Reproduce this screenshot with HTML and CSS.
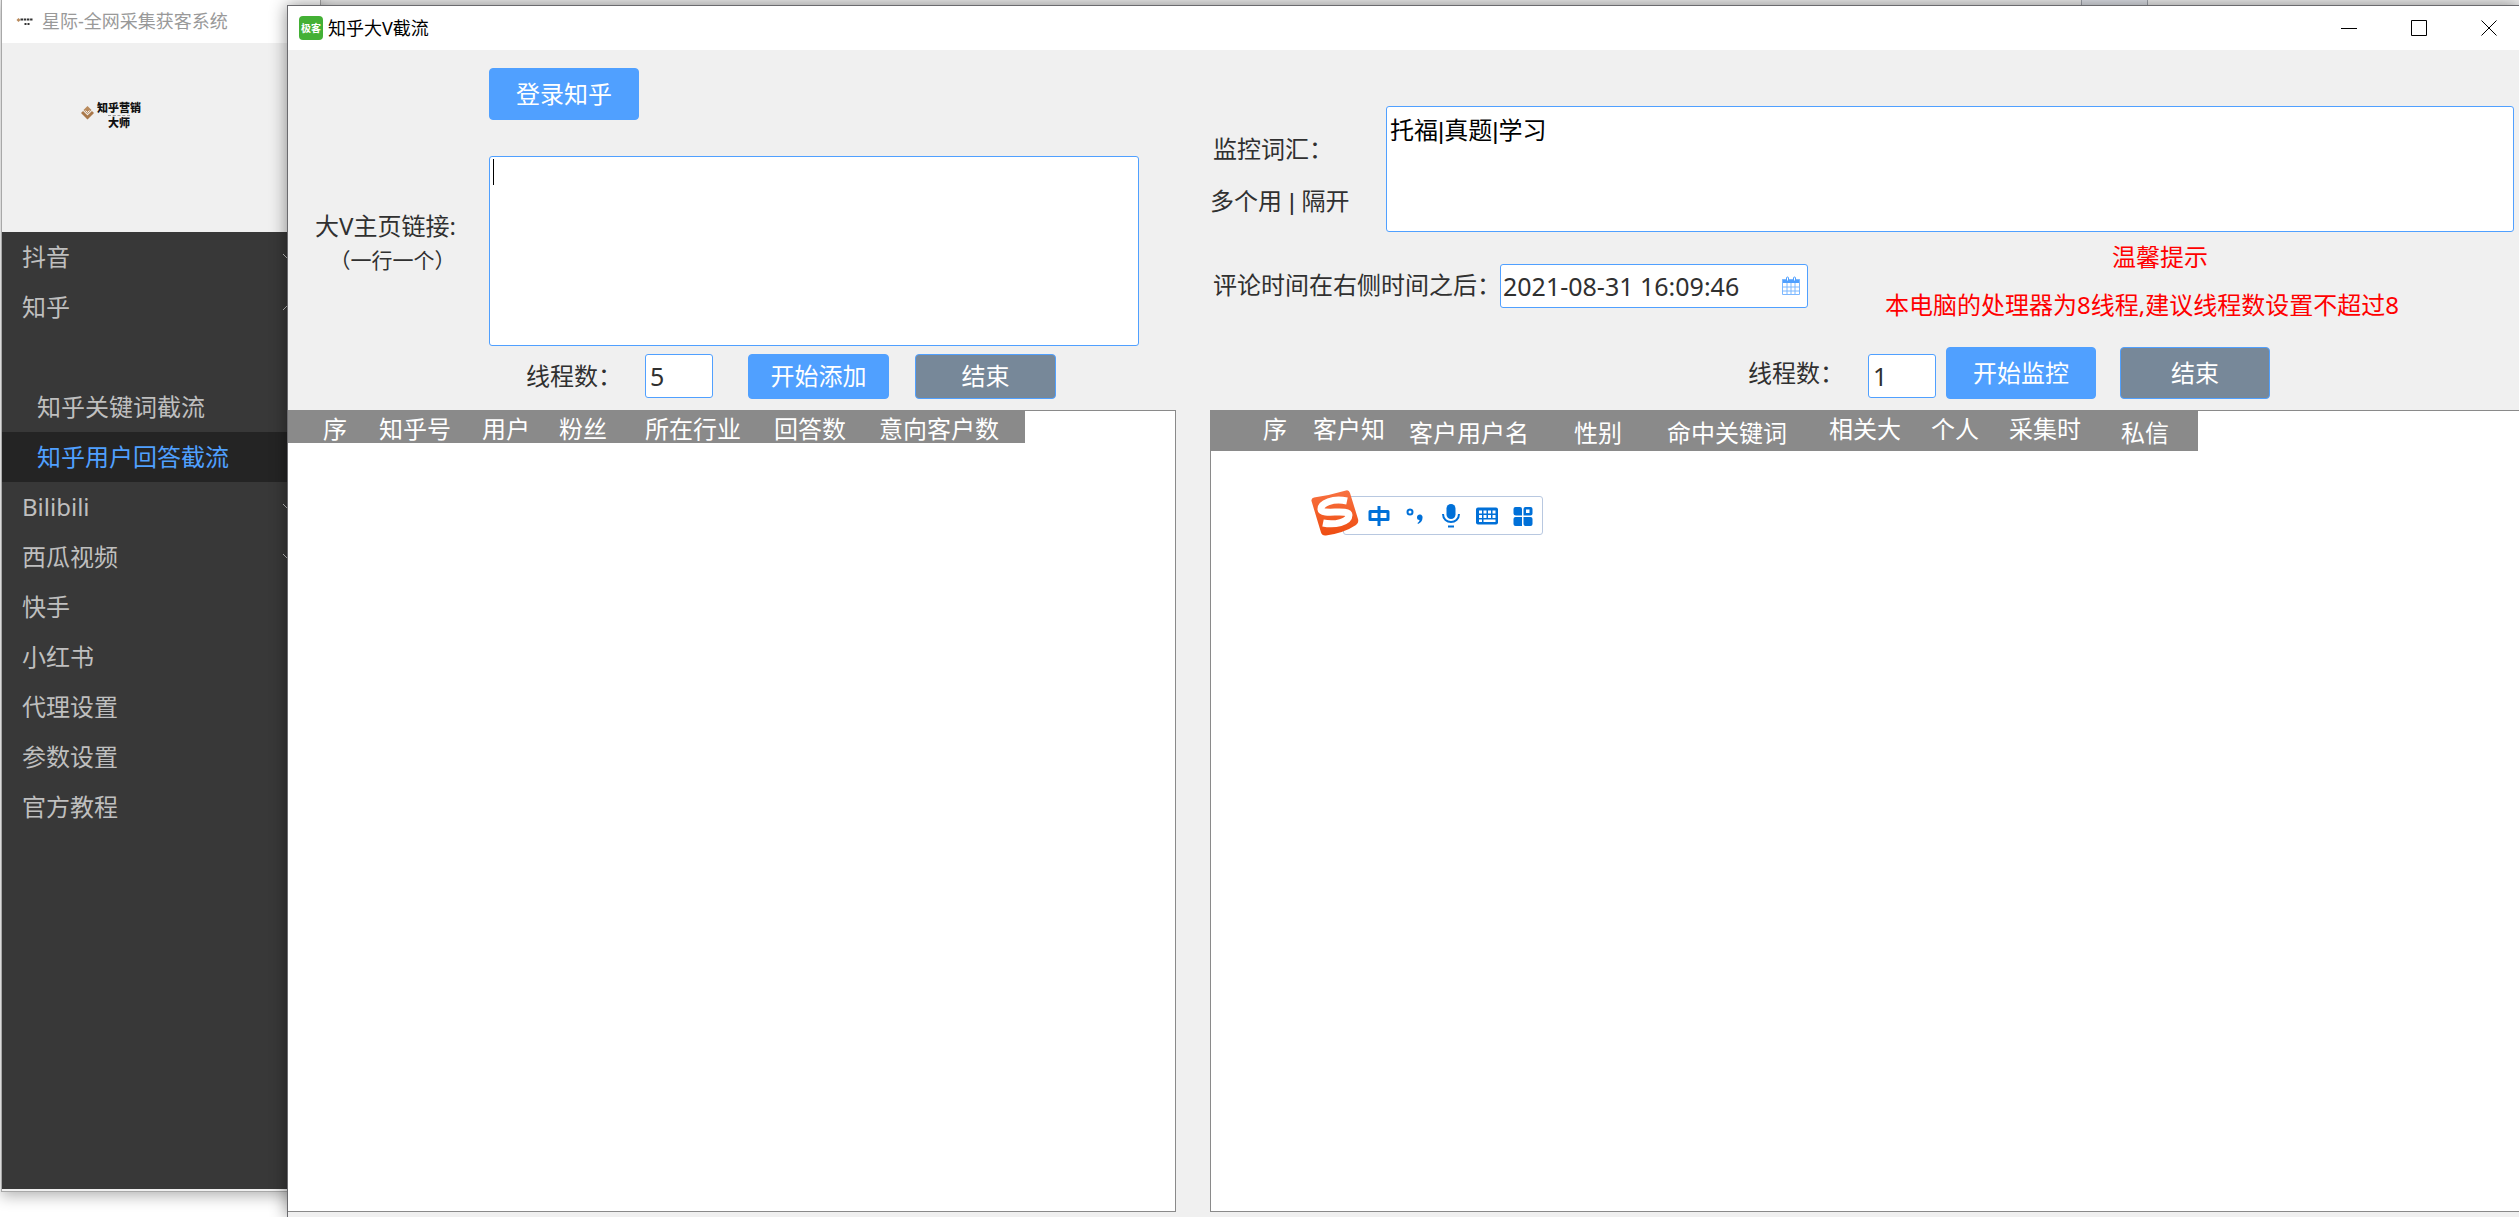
FILE: index.html
```html
<!DOCTYPE html>
<html lang="zh-CN">
<head>
<meta charset="utf-8">
<title>知乎大V截流</title>
<link rel="stylesheet" href="styles.css">
</head>
<body>
<div class="desktop">
  <div class="backdrop"><span class="backdrop-tab"></span></div>

  <section class="window window-back">
    <header class="titlebar titlebar-inactive">
      <svg class="app-mark" viewBox="0 0 16 10" aria-hidden="true">
        <path d="M2 2l2 2-2 2-2-2z" fill="#b98a5c"/>
        <path d="M4 3.500h12" stroke="#333" stroke-width="2" stroke-dasharray="2.500 .7"/>
        <path d="M8 8h5" stroke="#333" stroke-width="2" stroke-dasharray="2 1"/>
      </svg>
      <span>星际-全网采集获客系统</span>
    </header>
    <div class="brand">
      <svg class="brand-mark" viewBox="0 0 13 14" aria-hidden="true">
        <path d="M6.500 0l4 4-4 4-4-4z" fill="#b98a5c"/>
        <path d="M1 6l5.500 5.500L12 6" fill="none" stroke="#a9784a" stroke-width="3"/>
        <path d="M4.500 4.500l2 2 2-2" fill="none" stroke="#f0f0f0"/>
      </svg>
      <div class="brand-name"><b>知乎营销</b><i></i><b>大师</b></div>
    </div>
    <nav class="menu">
      <a href="#" class="menu-item">抖音<svg class="chevron" viewBox="0 0 14 8"><path d="M1 1l6 6 6-6"/></svg></a>
      <a href="#" class="menu-item">知乎<svg class="chevron" viewBox="0 0 14 8"><path d="M1 7l6-6 6 6"/></svg></a>
      <div class="submenu">
        <a href="#" class="menu-item">知乎关键词截流</a>
        <a href="#" class="menu-item menu-item-active">知乎用户回答截流</a>
      </div>
      <a href="#" class="menu-item">Bilibili<svg class="chevron" viewBox="0 0 14 8"><path d="M1 1l6 6 6-6"/></svg></a>
      <a href="#" class="menu-item">西瓜视频<svg class="chevron" viewBox="0 0 14 8"><path d="M1 1l6 6 6-6"/></svg></a>
      <a href="#" class="menu-item">快手</a>
      <a href="#" class="menu-item">小红书</a>
      <a href="#" class="menu-item">代理设置</a>
      <a href="#" class="menu-item">参数设置</a>
      <a href="#" class="menu-item">官方教程</a>
    </nav>
  </section>

  <section class="window window-front">
    <header class="titlebar">
      <span class="app-badge">极客</span>
      <span class="title">知乎大V截流</span>
      <button class="caption" aria-label="最小化"><svg viewBox="0 0 16 16"><path d="M0 8.500h16"/></svg></button>
      <button class="caption" aria-label="最大化"><svg viewBox="0 0 16 16"><path d="M.5.5h15v15H.5z"/></svg></button>
      <button class="caption" aria-label="关闭"><svg viewBox="0 0 16 16"><path d="M.5.5l15 15M15.500.5l-15 15"/></svg></button>
    </header>

    <main class="panes">
      <section class="pane">
        <form class="form collect-form">
          <button type="button" class="btn btn-large login">登录知乎</button>
          <label class="links-label" for="links">大V主页链接:<small>（一行一个）</small></label>
          <textarea id="links" class="field links"></textarea>
          <div class="thread-row collect-threads">
            <label for="threads-add">线程数：</label>
            <input id="threads-add" class="field count" type="text" value="5">
            <button type="button" class="btn start">开始添加</button>
            <button type="button" class="btn btn-end">结束</button>
          </div>
        </form>
        <div class="grid grid-users">
          <table>
            <colgroup><col class="u1"><col class="u2"><col class="u3"><col class="u4"><col class="u5"><col class="u6"><col class="u7"></colgroup>
            <thead><tr><th>序</th><th>知乎号</th><th>用户</th><th>粉丝</th><th>所在行业</th><th>回答数</th><th>意向客户数</th></tr></thead>
          </table>
        </div>
      </section>

      <section class="pane">
        <form class="form monitor-form">
          <div class="words-row">
            <label class="words-label" for="words"><span>监控词汇：</span>多个用 | 隔开</label>
            <textarea id="words" class="field words">托福|真题|学习</textarea>
          </div>
          <div class="time-row">
            <label for="after">评论时间在右侧时间之后：</label>
            <div class="field date">
              <input id="after" type="text" value="2021-08-31 16:09:46">
              <svg class="calendar" viewBox="0 0 18 20" aria-hidden="true">
                <path d="M.5 3h17v4H.5z" fill="#50a0ff"/>
                <path d="M.5 3.500h17v15H.5zM.5 11h17M.5 15h17M5 7v11.500M9 7v11.500M13 7v11.500" fill="none" stroke="#7db8ff"/>
                <path d="M4.500 5V2a1 1 0 0 1 2 0v3zM11.500 5V2a1 1 0 0 1 2 0v3z" fill="#fff" stroke="#50a0ff"/>
              </svg>
            </div>
            <div class="tip"><strong>温馨提示</strong>本电脑的处理器为8线程,建议线程数设置不超过8</div>
          </div>
          <div class="thread-row monitor-threads">
            <label for="threads-watch">线程数：</label>
            <input id="threads-watch" class="field count" type="text" value="1">
            <button type="button" class="btn btn-large start">开始监控</button>
            <button type="button" class="btn btn-large btn-end">结束</button>
          </div>
        </form>
        <div class="grid grid-leads">
          <table>
            <colgroup><col class="l1"><col class="l2"><col class="l3"><col class="l4"><col class="l5"><col class="l6"><col class="l7"><col class="l8"><col class="l9"></colgroup>
            <thead><tr><th>序</th><th>客户知</th><th class="low">客户用户名</th><th class="low">性别</th><th class="low">命中关键词</th><th>相关大</th><th>个人</th><th>采集时</th><th class="low">私信</th></tr></thead>
          </table>
        </div>
      </section>
    </main>
  </section>

  <aside class="ime">
    <svg class="ime-logo" viewBox="0 0 48 46" aria-hidden="true">
      <defs><linearGradient id="flame" x1="0" y1="0" x2="0" y2="1"><stop offset="0" stop-color="#f87140"/><stop offset="1" stop-color="#ee4d12"/></linearGradient></defs>
      <path d="M3 7.500Q20 5 35 .5q3-.8 4 2.500l8 26q1 4-2 6-12 8-30 10.500-4 .5-5-3L.5 11q-.5-3 2.500-3.500z" fill="url(#flame)"/>
      <path d="M36 11C22 8 9.500 13 10 19.500c.5 6 28-1 28 5.500C38 32 24 35.500 12 33" fill="none" stroke="#fff" stroke-width="7"/>
    </svg>
    <div class="ime-bar">
      <button aria-label="中文"><svg viewBox="0 0 22 22"><path d="M2 6.500h18v8H2zM11 1v20" fill="none" stroke="#0070d8" stroke-width="3" stroke-linejoin="round"/></svg></button>
      <button aria-label="标点"><svg viewBox="0 0 22 22"><circle cx="6" cy="7" r="2.500" fill="none" stroke="#0070d8" stroke-width="2"/><path d="M13 12.500a2.800 2.800 0 1 1 5.500.5c0 3-2 5-4.500 6l-.5-1c1.500-1 2-2 2-3q-2.500 0-2.500-2.500z" fill="#0070d8"/></svg></button>
      <button aria-label="语音"><svg viewBox="0 0 22 24"><rect x="6.500" y="0" width="9" height="15" rx="4.500" fill="#0070d8"/><path d="M3 10c0 10.500 16 10.500 16 0M8 22.500h6" fill="none" stroke="#0070d8" stroke-width="2"/></svg></button>
      <button aria-label="键盘"><svg viewBox="0 0 22 22"><rect x="0" y="2.500" width="22" height="17" rx="2" fill="#0070d8"/><path d="M3 5.500h3v3H3zM7.500 5.500h3v3h-3zM12 5.500h3v3h-3zM16.500 5.500h3v3h-3zM3 10h3v3H3zM7.500 10h3v3h-3zM12 10h3v3h-3zM16.500 10h3v3h-3zM3 14.500h3V17H3zM7.500 14.500h12V17h-12z" fill="#fff"/></svg></button>
      <button aria-label="工具箱"><svg viewBox="0 0 22 22"><path d="M1.500 4q0-2 2-2H8q2 0 2 2v6.500H4q-2.500 0-2.500-2zM11.500 4q0-2 2-2h5q2 0 2 2v4.500q0 2-2 2h-7zM1.500 14q0-2 2-2H10v9H3.500q-2 0-2-2zM11.500 12h7q2 0 2 2v5q0 2-2 2h-5q-2 0-2-2z" fill="#0070d8"/><path d="M14 4.500h3.500V8H14z" fill="#fff"/></svg></button>
    </div>
  </aside>
</div>
</body>
</html>
```
FILE: styles.css
```css
* { box-sizing: border-box; }

body {
  margin: 0;
  font: 24px/36px "Noto Sans", "Noto Sans CJK SC", sans-serif;
  color: #303030;
}

button, input, textarea { font: inherit; color: inherit; }

.desktop {
  position: relative;
  min-height: 100vh;
  overflow: hidden;
  background: #fff;
}

.backdrop {
  display: flex;
  height: 20px;
  padding-left: 2081px;
  background: #f0f0f0;
}

.backdrop-tab {
  width: 67px;
  border: solid #a0a4ac;
  border-width: 0 1px;
  background: #e0e3e9;
}

/* Windows */
.window {
  position: absolute;
  display: flex;
  flex-direction: column;
  background: #f0f0f0;
}

.window-back {
  top: 0;
  bottom: 25px;
  left: 1px;
  width: 320px;
  border: solid #a8a8a8;
  border-width: 0 1px 1px;
  padding-bottom: 2px;
  box-shadow: 0 4px 14px rgba(0, 0, 0, .3);
}

.window-front {
  top: 5px;
  right: 0;
  bottom: 0;
  left: 287px;
  border: solid #6a6a6e;
  border-width: 1px 0 0 1px;
  box-shadow: 0 0 16px rgba(0, 0, 0, .45);
}

.titlebar {
  display: flex;
  align-items: center;
  height: 44px;
  padding-left: 11px;
  background: #fff;
  color: #000;
  font-size: 18px;
}

.titlebar-inactive {
  height: 43px;
  padding: 0 0 2px 14px;
  gap: 9px;
  color: #999;
}

.app-mark { width: 17px; height: 10px; }

.app-badge {
  width: 24px;
  height: 24px;
  margin-right: 5px;
  border-radius: 4px;
  background: #43b035;
  color: #fff;
  font-size: 10px;
  font-weight: bold;
  line-height: 24px;
  text-align: center;
}

.title { flex: 1; }

.caption {
  width: 60px;
  height: 44px;
  margin-left: 10px;
  border: 0;
  padding: 0;
  background: none;
}

.caption svg {
  display: block;
  width: 16px;
  height: 16px;
  margin: 0 auto;
  fill: none;
  stroke: #000;
}

/* Sidebar */
.brand {
  display: flex;
  gap: 3px;
  height: 189px;
  padding: 58px 0 0 79px;
}

.brand-mark { width: 13px; height: 14px; margin-top: 5px; }

.brand-name {
  display: flex;
  flex-direction: column;
  align-items: center;
  color: #111;
  font-size: 11px;
  line-height: 14px;
}

.brand-name b { font-weight: 900; }

.brand-name i {
  width: 22px;
  border-top: 1px dashed #999;
}

.menu {
  flex: 1;
  background: #383838;
}

.menu-item {
  display: flex;
  align-items: center;
  height: 50px;
  padding-left: 20px;
  color: #bfbfbf;
  text-decoration: none;
}

.submenu { padding-top: 50px; }
.submenu .menu-item { padding-left: 35px; }

.menu .menu-item-active {
  background: #242424;
  color: #50a0ff;
}

.chevron {
  width: 14px;
  height: 8px;
  margin: 0 24px 0 auto;
  fill: none;
  stroke: #bfbfbf;
}

/* Panes */
.panes {
  flex: 1;
  display: grid;
  grid-template-columns: minmax(0, 888fr) minmax(0, 1309fr);
  gap: 34px;
  padding-bottom: 5px;
}

.pane {
  display: flex;
  flex-direction: column;
}

.form { height: 360px; }

.field {
  border: 1px solid #50a0ff;
  border-radius: 3px;
  background: #fff;
  outline: 0;
  resize: none;
}

.btn {
  width: 141px;
  height: 45px;
  border: 1px solid #50a0ff;
  border-radius: 4px;
  padding: 0;
  background: #50a0ff;
  color: #fff;
}

.btn-large { width: 150px; height: 52px; }
.btn-end { background: #778899; }

.collect-form {
  display: grid;
  grid-template: 88px 190px 60px / 201px 1fr;
  padding: 18px 37px 0 0;
}

.login { grid-column: 2; }

.links-label {
  align-self: center;
  padding: 0 6px 18px 0;
  text-align: center;
}

.links-label small {
  display: block;
  padding-left: 14px;
  font-size: 21px;
  line-height: 32px;
}

/* The empty box shows its insertion point even while unfocused */
.links {
  height: 190px;
  padding: 0 2px;
  background: linear-gradient(#000, #000) 3px 2px / 1px 26px no-repeat #fff;
}

.links:focus { background: #fff; }

.thread-row { display: flex; }
.count { width: 68px; height: 44px; padding: 0 4px; font-size: 25px; }

.collect-threads {
  grid-column: 2;
  align-items: center;
  padding-left: 37px;
}

.collect-threads label { width: 119px; }
.collect-threads .start { margin: 0 26px 0 35px; }

.monitor-form { padding: 56px 5px 0 0; }
.words-row { display: flex; }

.words-label {
  width: 176px;
  padding-top: 18px;
  font-family: "Liberation Sans", "Noto Sans CJK SC", sans-serif;
  line-height: 52px;
}

.words-label span {
  display: block;
  padding-left: 3px;
}

.words {
  flex: 1;
  height: 126px;
  padding: 6px 3px;
  color: #000;
  font-family: "Liberation Sans", "Noto Sans CJK SC", sans-serif;
}

.time-row {
  display: flex;
  align-items: center;
  height: 104px;
  padding-left: 3px;
  white-space: nowrap;
}

.time-row label { width: 287px; padding-top: 2px; }

.date {
  display: flex;
  align-items: center;
  width: 308px;
  height: 44px;
  margin-top: 4px;
  padding: 0 7px 0 2px;
}

.date input {
  flex: 1;
  min-width: 0;
  border: 0;
  padding: 0;
  outline: 0;
  font-size: 25px;
}

.calendar { width: 18px; height: 20px; }

.tip {
  margin-left: 77px;
  padding-bottom: 6px;
  color: #f00;
  line-height: 48px;
}

.tip strong {
  display: block;
  padding-left: 36px;
  font-weight: normal;
  text-align: center;
}

.monitor-threads {
  align-items: center;
  margin-top: 11px;
  padding-left: 538px;
}

.monitor-threads label { width: 120px; }
.monitor-threads .count { margin-top: 6px; }
.monitor-threads .start { margin: 0 24px 0 10px; }

/* Data grids */
.grid {
  flex: 1;
  border: 1px solid #8a8a8a;
  background: #fff;
}

.grid-users { border-left: 0; }
.grid-leads { border-right: 0; }

table {
  border-collapse: collapse;
  table-layout: fixed;
  background: #8a8a8a;
  color: #fff;
}

th {
  padding: 3px 0 0 1px;
  font-weight: normal;
  line-height: 29px;
  text-align: left;
  vertical-align: top;
  white-space: nowrap;
}

.grid-users table { width: 737px; }
.grid-users th { height: 32px; }
.grid-users th:first-child { padding-left: 35px; }
.u1 { width: 90px; }
.u2 { width: 103px; }
.u3 { width: 77px; }
.u4 { width: 86px; }
.u5 { width: 129px; }
.u6 { width: 105px; }
.u7 { width: 147px; }

.grid-leads table { width: 987px; }
.grid-leads th { height: 40px; }
.grid-leads th:first-child { padding-left: 52px; }
.grid-leads .low { padding-top: 7px; }
.l1 { width: 101px; }
.l2 { width: 96px; }
.l3 { width: 165px; }
.l4 { width: 93px; }
.l5 { width: 162px; }
.l6 { width: 102px; }
.l7 { width: 78px; }
.l8 { width: 112px; }
.l9 { width: 78px; }

/* Floating input-method toolbar */
.ime {
  position: absolute;
  top: 490px;
  left: 1311px;
  display: flex;
  align-items: flex-end;
}

.ime-logo {
  position: relative;
  z-index: 1;
  width: 48px;
  height: 46px;
}

.ime-bar {
  display: flex;
  align-items: center;
  gap: 14px;
  width: 200px;
  height: 39px;
  margin: 0 0 1px -16px;
  border: 1px solid #b8c8e0;
  border-radius: 3px;
  padding-left: 24px;
  background: #fff;
}

.ime-bar button {
  width: 22px;
  height: 24px;
  border: 0;
  padding: 0;
  background: none;
}

.ime-bar svg { display: block; width: 22px; height: 24px; }
```
